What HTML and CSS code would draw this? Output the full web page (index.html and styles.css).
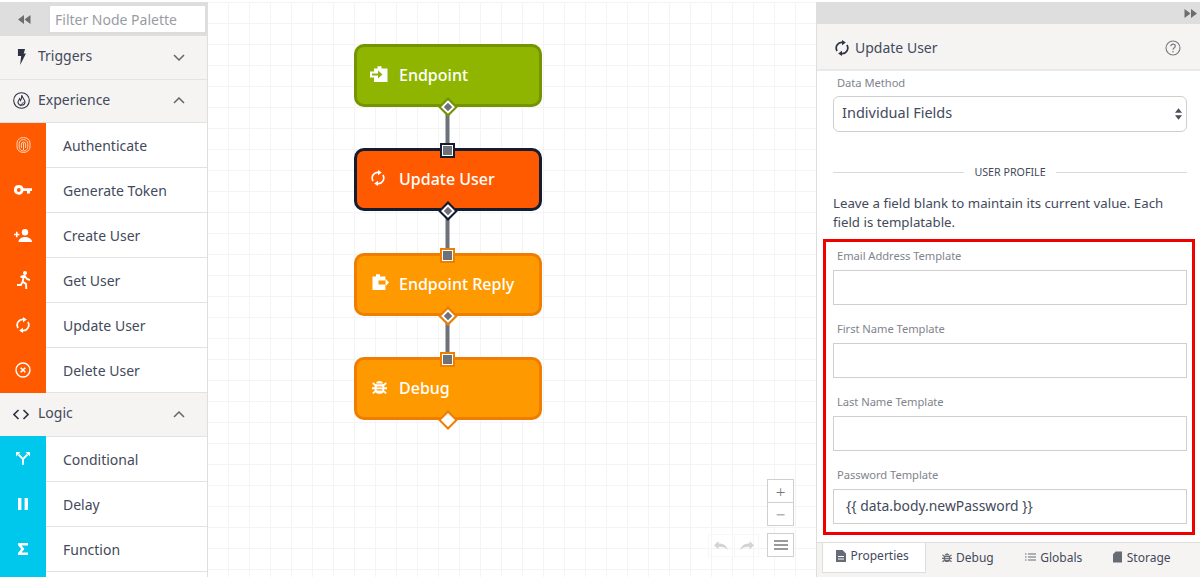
FILE: index.html
```html
<!DOCTYPE html>
<html lang="en">
<head>
<meta charset="utf-8">
<title>Update User workflow</title>
<link rel="stylesheet" href="styles.css">
</head>
<body>
<svg class="defs" width="0" height="0" aria-hidden="true">
  <symbol id="i-sync" viewBox="0 0 14 16">
    <path d="M2.100 11A5.700 5.700 0 0 1 8 2.400" fill="none" stroke="currentColor" stroke-width="1.700"/>
    <path d="M7 0 10.800 2.600 7 5.200Z" fill="currentColor"/>
    <path d="M11.900 5A5.700 5.700 0 0 1 6 13.600" fill="none" stroke="currentColor" stroke-width="1.700"/>
    <path d="M7 16 3.200 13.400 7 10.800Z" fill="currentColor"/>
  </symbol>
  <symbol id="i-in" viewBox="0 0 18 16">
    <path d="M4 2.500H7.500V0.300H11.500V2.500H17.500V16H4Z" fill="#fff"/>
    <path d="M0 5.500H4V11.500H0Z" fill="#fff"/>
    <path d="M2 7.500H8V4.500L12.500 8.500 8 12.500V9.500H2Z" fill="#8fb500"/>
  </symbol>
  <symbol id="i-out" viewBox="0 0 18 16">
    <path d="M0.500 2.500H4V0.300H8V2.500H13.500V16H0.500Z" fill="#fff"/>
    <path d="M6.500 6.500H13.500V3.500L18 8.500 13.500 13.500V10.500H6.500Z" fill="#ff9900"/>
    <path d="M13.500 4.800 17 8.500 13.500 12.200Z" fill="#fff"/>
  </symbol>
  <symbol id="i-bug" viewBox="0 0 16 16">
    <path d="M4.500 4.200C4.500 0.800 11.500 0.800 11.500 4.200Z" fill="currentColor"/>
    <path d="M3.500 5H12.500C13.600 7 13.600 12 12 13.800 10.500 15.600 5.500 15.600 4 13.800 2.400 12 2.400 7 3.500 5Z" fill="currentColor"/>
    <path d="M0.800 3.800 4 6.300M15.200 3.800 12 6.300M0 9.300H4M16 9.300H12M0.800 14.800 4 12.300M15.200 14.800 12 12.300" stroke="currentColor" stroke-width="2" fill="none"/>
    <path d="M5 8H11M5 11H11" stroke="var(--stripe)" stroke-width="1.300"/>
  </symbol>
</svg>
<div class="app">
  <aside class="palette">
    <div class="palette-top">
      <button class="collapse" aria-label="Collapse"><svg width="13" height="9" viewBox="0 0 13 9"><path d="M6 0V9L0 4.500ZM12.500 0V9L6.500 4.500Z" fill="#6d6d6d"/></svg></button>
      <input class="filter" placeholder="Filter Node Palette">
    </div>

    <div class="cat">
      <span class="cat-icon"><svg width="9" height="16" viewBox="0 0 10 18"><path d="M1 0H9L7.500 5H10L3.500 18 4.600 8H1Z" fill="#2d3345"/></svg></span>
      <span class="cat-name">Triggers</span>
      <svg class="chev" width="12" height="7" viewBox="0 0 12 7"><path d="M1 1 6 6 11 1" fill="none" stroke="#666" stroke-width="1.500"/></svg>
    </div>
    <div class="cat">
      <span class="cat-icon"><svg width="17" height="17" viewBox="0 0 17 17"><circle cx="8.500" cy="8.500" r="7.800" fill="none" stroke="#2d3345" stroke-width="1.100"/><path d="M8.700 3.200C9.200 6 12 7.600 12 10.400A3.600 3.600 0 0 1 5 10.600C5 8.800 6.200 8 6.600 6.600 7.200 7.200 7.500 7.800 7.600 8.400 8.500 7 8.900 5 8.700 3.200Z" fill="none" stroke="#2d3345" stroke-width="1.100"/><path d="M7 14 10.600 10" stroke="#2d3345" stroke-width="0.900"/></svg></span>
      <span class="cat-name">Experience</span>
      <svg class="chev" width="12" height="7" viewBox="0 0 12 7"><path d="M1 6 6 1 11 6" fill="none" stroke="#666" stroke-width="1.500"/></svg>
    </div>

    <div class="item">
      <span class="tile orange"><svg width="15" height="16" viewBox="0 0 15 16" fill="none" stroke="#ffd2b8" stroke-width="1"><path d="M1 6A6.500 5.500 0 0 1 14 6V10A6.500 5.500 0 0 1 1 10Z"/><path d="M3.200 10V6.500A4.300 4 0 0 1 11.800 6.500V10A4.300 4 0 0 1 3.200 10Z"/><path d="M5.400 11V7A2.100 2 0 0 1 9.600 7V11"/><path d="M7.500 6V13"/></svg></span>
      <span class="item-name">Authenticate</span>
    </div>
    <div class="item">
      <span class="tile orange"><svg width="18" height="10" viewBox="0 0 18 10"><path d="M4.800 0A4.800 4.800 0 0 1 9.400 3.200H18V6H16V8.500H13V6H9.400A4.800 4.800 0 1 1 4.800 0ZM4.800 3.100A1.900 1.900 0 1 0 4.800 6.900 1.900 1.900 0 0 0 4.800 3.100Z" fill="#fff" fill-rule="evenodd"/></svg></span>
      <span class="item-name">Generate Token</span>
    </div>
    <div class="item">
      <span class="tile orange"><svg width="18" height="13" viewBox="0 0 18 13"><circle cx="11" cy="3.200" r="3.200" fill="#fff"/><path d="M4.500 13C4.500 9.500 8 8 11 8S18 9.500 18 13Z" fill="#fff"/><path d="M0 5.500H5.500M2.750 2.800V8.200" stroke="#fff" stroke-width="1.600"/></svg></span>
      <span class="item-name">Create User</span>
    </div>
    <div class="item">
      <span class="tile orange"><svg width="13" height="18" viewBox="0 0 13 18"><circle cx="8" cy="2" r="2" fill="#fff"/><path d="M3.500 6 7.500 4.600 10 8 13 9M6.700 5.500 5.700 10.500 9 13 9.300 18M5.200 11.500 3.800 14H0" fill="none" stroke="#fff" stroke-width="1.900"/></svg></span>
      <span class="item-name">Get User</span>
    </div>
    <div class="item">
      <span class="tile orange"><svg class="white" width="14" height="16"><use href="#i-sync"/></svg></span>
      <span class="item-name">Update User</span>
    </div>
    <div class="item">
      <span class="tile orange"><svg width="16" height="16" viewBox="0 0 16 16" fill="none" stroke="#fff"><circle cx="8" cy="8" r="7" stroke-width="1.400"/><path d="M5.700 5.700 10.300 10.300M10.300 5.700 5.700 10.300" stroke-width="1.600"/></svg></span>
      <span class="item-name">Delete User</span>
    </div>

    <div class="cat">
      <span class="cat-icon"><svg width="16" height="11" viewBox="0 0 16 11" fill="none" stroke="#2d3345" stroke-width="1.600"><path d="M5.500 1 1 5.500 5.500 10M10.500 1 15 5.500 10.500 10"/></svg></span>
      <span class="cat-name">Logic</span>
      <svg class="chev" width="12" height="7" viewBox="0 0 12 7"><path d="M1 6 6 1 11 6" fill="none" stroke="#666" stroke-width="1.500"/></svg>
    </div>
    <div class="item logic">
      <span class="tile cyan"><svg width="14" height="13" viewBox="0 0 14 13"><path d="M7 13V7L2.500 2.500M7 7 11.500 2.500" fill="none" stroke="#fff" stroke-width="1.800"/><path d="M0 0H4.500L0 4.500ZM14 0H9.500L14 4.500Z" fill="#fff"/></svg></span>
      <span class="item-name">Conditional</span>
    </div>
    <div class="item logic">
      <span class="tile cyan"><svg width="10" height="12" viewBox="0 0 10 12"><rect width="3.400" height="12" fill="#fff"/><rect x="6.600" width="3.400" height="12" fill="#fff"/></svg></span>
      <span class="item-name">Delay</span>
    </div>
    <div class="item logic">
      <span class="tile cyan"><svg width="10" height="12" viewBox="0 0 10 12"><path d="M0 0H10V2.400H3.600L6.400 6 3.600 9.600H10V12H0V10L3.200 6 0 2Z" fill="#fff"/></svg></span>
      <span class="item-name">Function</span>
    </div>
    <div class="item">
      <span class="tile cyan"></span>
    </div>
  </aside>

  <main class="canvas">
    <svg class="wires" width="608" height="575" viewBox="208 2 608 575">
      <path d="M447.500 105V150M447.500 209V254M447.500 314V358" stroke="#6f7178" stroke-width="4" fill="none"/>
    </svg>

    <div class="node node-a green">
      <svg class="node-icon" width="18" height="16"><use href="#i-in"/></svg>
      <span>Endpoint</span>
      <i class="port-out"></i>
    </div>
    <div class="node node-b red">
      <i class="port-in"></i>
      <svg class="node-icon sync" width="14" height="16"><use href="#i-sync"/></svg>
      <span>Update User</span>
      <i class="port-out"></i>
    </div>
    <div class="node node-c amber">
      <i class="port-in"></i>
      <svg class="node-icon reply" width="18" height="16"><use href="#i-out"/></svg>
      <span>Endpoint Reply</span>
      <i class="port-out"></i>
    </div>
    <div class="node node-d amber">
      <i class="port-in"></i>
      <svg class="node-icon bug" width="15" height="16"><use href="#i-bug"/></svg>
      <span>Debug</span>
      <i class="port-out open"></i>
    </div>

    <div class="zoom-box">
      <button class="zoom-btn" aria-label="Zoom in">+</button>
      <button class="zoom-btn minus" aria-label="Zoom out">&minus;</button>
    </div>
    <div class="history">
      <span class="hist-btn"><svg width="14" height="9" viewBox="0 0 14 9"><path d="M4.500 0V2.500C9.500 2.500 12.500 4.500 14 9 11.500 6.500 9 5.800 4.500 5.800V8.500L0 4.200Z" fill="#d4d4d4"/></svg></span>
      <span class="hist-btn"><svg width="14" height="9" viewBox="0 0 14 9"><path d="M9.500 0V2.500C4.500 2.500 1.500 4.500 0 9 2.500 6.500 5 5.800 9.500 5.800V8.500L14 4.200Z" fill="#d4d4d4"/></svg></span>
      <button class="menu-btn" aria-label="Menu"><svg width="14" height="10" viewBox="0 0 14 10"><path d="M0 1H14M0 5H14M0 9H14" stroke="#7a7a7a" stroke-width="1.400"/></svg></button>
    </div>
  </main>

  <aside class="props">
    <div class="props-bar"><svg width="13" height="9" viewBox="0 0 13 9"><path d="M0.500 0V9L6.500 4.500ZM7 0V9L13 4.500Z" fill="#6d6d6d"/></svg></div>
    <header class="props-head">
      <svg class="dark" width="14" height="16"><use href="#i-sync"/></svg>
      <h1>Update User</h1>
      <svg class="help" width="16" height="16" viewBox="0 0 16 16" fill="none" stroke="#77797f"><circle cx="8" cy="8" r="7" stroke-width="1.100"/><path d="M5.800 6.200C5.800 3.500 10.300 3.600 10.300 6.200 10.300 7.800 8 7.800 8 9.800" stroke-width="1.200"/><path d="M8 11V12.300" stroke-width="1.300"/></svg>
    </header>
    <div class="props-body">
      <div class="method">
        <label class="lbl">Data Method</label>
        <div class="select">
          <span>Individual Fields</span>
          <svg width="7" height="12" viewBox="0 0 8 13"><path d="M4 0 8 5H0ZM0 8H8L4 13Z" fill="#4a4f5c"/></svg>
        </div>
      </div>
      <div class="divider"><span>USER PROFILE</span></div>
      <p class="help-text">Leave a field blank to maintain its current value. Each field is templatable.</p>
      <div class="highlight">
        <div class="field"><label class="lbl">Email Address Template</label><div class="input"></div></div>
        <div class="field"><label class="lbl">First Name Template</label><div class="input"></div></div>
        <div class="field"><label class="lbl">Last Name Template</label><div class="input"></div></div>
        <div class="field"><label class="lbl">Password Template</label><div class="input">{{ data.body.newPassword }}</div></div>
      </div>
    </div>
    <nav class="tabs">
      <span class="tab active"><svg width="10" height="12" viewBox="0 0 10 12"><path d="M0 0H6.500L10 3.500V12H0ZM2 6V7H8V6ZM2 8.500V9.500H8V8.500Z" fill="#666b76" fill-rule="evenodd"/></svg>Properties</span>
      <span class="tab"><svg class="mid" width="10" height="11"><use href="#i-bug"/></svg>Debug</span>
      <span class="tab"><svg width="11" height="8" viewBox="0 0 11 8"><path d="M0 1H1.500M3 1H11M0 4H1.500M3 4H11M0 7H1.500M3 7H11" stroke="#666b76" stroke-width="1.100"/></svg>Globals</span>
      <span class="tab"><svg width="9" height="12" viewBox="0 0 10 12"><path d="M3 0H10V12H0V3Z" fill="#666b76"/></svg>Storage</span>
    </nav>
  </aside>
</div>
</body>
</html>
```

FILE: styles.css
```css
* { box-sizing: border-box; }
html, body { margin: 0; height: 100%; }
body {
  font-family: "Noto Sans", "Open Sans", sans-serif;
  color: #434a5b;
  background: #fff;
  overflow: hidden;
}
.defs { position: absolute; }
.white { color: #fff; }
.dark { color: #2d3345; }
.mid { color: #666b76; }

.app {
  display: flex;
  height: 577px;
  padding-top: 2px;
  background: #fff;
}

/* palette */
.palette {
  width: 208px;
  flex: none;
  border-right: 1px solid #dedede;
  overflow: hidden;
  height: 575px;
}
.palette-top {
  display: flex;
  height: 34px;
  background: #dedede;
}
.collapse {
  width: 48px;
  border: 0;
  padding: 0;
  background: transparent;
  display: flex;
  align-items: center;
  justify-content: center;
}
.filter {
  width: 158px;
  height: 29px;
  margin-top: 3px;
  border: 1px solid #dcdcdc;
  border-width: 1px 1px 2px 2px;
  background: #fff;
  padding: 0 0 0 5px;
  font: 14px "Noto Sans", sans-serif;
  outline: 0;
}
.filter::placeholder { color: #9a9ca3; opacity: 1; }

.cat {
  display: flex;
  align-items: center;
  height: 43.500px;
  background: #f5f4f3;
  border-bottom: 1px solid #e3e3e3;
  padding-right: 22px;
}
.cat-icon {
  width: 42px;
  margin-right: -4px;
  display: flex;
  justify-content: center;
}
.cat-name { flex: 1; font-size: 14px; padding-bottom: 3px; }
.item {
  display: flex;
  align-items: center;
  height: 45px;
  border-bottom: 1px solid #e2e2e2;
  background: #fff;
}
.tile {
  width: 46px;
  height: 45px;
  flex: none;
  display: flex;
  align-items: center;
  justify-content: center;
}
.orange { background: #ff5a00; }
.cyan { background: #00c8ed; }
.item-name {
  margin-left: 17px;
  font-size: 14px;
}
.logic .item-name { padding-top: 2px; }

/* canvas */
.canvas {
  position: relative;
  width: 608px;
  flex: none;
  height: 575px;
  background-color: #fff;
  background-image:
    linear-gradient(#f4f4f4 1px, transparent 1px),
    linear-gradient(90deg, #f4f4f4 1px, transparent 1px);
  background-size: 21px 21px;
  background-position: -1px 0;
}
.wires { position: absolute; left: 0; top: 0; }
.node {
  position: absolute;
  left: 146px;
  width: 188px;
  height: 63px;
  border-radius: 10px;
  border: 3px solid;
  display: flex;
  align-items: center;
  color: #fff;
  font-size: 16px;
  font-weight: 500;
}
.node-a { top: 42px; }
.node-b { top: 146px; }
.node-c { top: 251px; }
.node-d { top: 355px; }
.green { background: #8fb500; border-color: #759500; }
.red { background: #ff5a00; border-color: #141c33; }
.amber { background: #ff9900; border-color: #ee7d00; --stripe: #ff9900; }
.node-icon { position: absolute; left: 13px; top: 19px; }
.sync { left: 14px; top: 19px; }
.bug { left: 15px; top: 19px; }
.reply { left: 15px; top: 18px; }
.node span { margin-left: 42px; padding-bottom: 1px; }
.port-out {
  position: absolute;
  left: 85.500px;
  bottom: -7.500px;
  width: 10px;
  height: 10px;
  transform: rotate(45deg);
  background: #6f7178;
  border: 2px solid #fff;
  outline: 2px solid #759500;
}
.port-out.open { background: #fff; border-color: #fff; outline-color: #ee7d00; }
.red .port-out { outline-color: #141c33; }
.amber .port-out { outline-color: #ee7d00; }
.port-in {
  position: absolute;
  left: 85px;
  top: -6px;
  width: 11px;
  height: 11px;
  background: #6f7178;
  border: 1px solid #fff;
  outline: 2px solid #ee7d00;
}
.red .port-in { outline-color: #141c33; }

.zoom-box {
  position: absolute;
  left: 559px;
  top: 477px;
  width: 27px;
  height: 47px;
  border: 1px solid #cfcfcf;
  background: #fff;
  display: flex;
  flex-direction: column;
}
.zoom-btn {
  flex: 1;
  min-height: 0;
  border: 0;
  padding: 0;
  background: transparent;
  font: 300 17px/17px "Noto Sans", sans-serif;
  color: #777;
}
.minus { border-top: 1px solid #cfcfcf; }
.history {
  position: absolute;
  left: 500px;
  top: 531px;
  display: flex;
  align-items: center;
}
.hist-btn {
  width: 25px;
  height: 23px;
  margin-right: 1px;
  border: 1px solid #f7f7f7;
  display: flex;
  align-items: center;
  justify-content: center;
}
.menu-btn {
  width: 27px;
  height: 24px;
  margin-left: 7px;
  border: 1px solid #cfcfcf;
  background: #fff;
  padding: 0;
  display: flex;
  align-items: center;
  justify-content: center;
}

/* properties */
.props {
  width: 384px;
  flex: none;
  height: 575px;
  border-left: 1px solid #dedede;
  display: flex;
  flex-direction: column;
}
.props-bar {
  height: 22px;
  background: #dedede;
  display: flex;
  align-items: center;
  justify-content: flex-end;
  padding-right: 3px;
}
.props-head {
  height: 47px;
  background: #f5f4f3;
  border-bottom: 2px solid #e9e9e9;
  display: flex;
  align-items: center;
  padding: 2px 19px 0 18px;
  gap: 6px;
}
.props-head h1 {
  flex: 1;
  margin: 0;
  font-size: 14px;
  font-weight: 400;
}
.props-body {
  flex: 1;
  padding: 4px 5px 0 6px;
  min-height: 0;
}
.lbl {
  display: block;
  font-size: 11.200px;
  letter-spacing: -0.050px;
  color: #81848d;
  line-height: 16px;
  padding-left: 4px;
}
.method { padding: 0 8px 0 10px; }
.method .lbl { padding-left: 0; margin-left: 4px; }
.select {
  margin-top: 5px;
  height: 36px;
  border: 1px solid #cfcfcf;
  border-radius: 6px;
  display: flex;
  align-items: center;
  justify-content: space-between;
  padding: 0 4px 5px 8px;
  font-size: 14.500px;
}
.select svg { margin-top: 5px; }
.divider {
  display: flex;
  align-items: center;
  gap: 10px;
  padding: 0 8px 0 10px;
  margin-top: 30px;
  font-size: 10.700px;
  line-height: 20px;
  color: #434a5b;
}
.divider::before, .divider::after {
  content: "";
  flex: 1;
  height: 1px;
  background: #d8d8d8;
}
.help-text {
  margin: 12px 8px 0 10px;
  font-size: 13.250px;
  line-height: 19px;
}
.highlight {
  margin-top: 7px;
  border: 3px solid #f10000;
  height: 296px;
  padding: 6px 5px 0 7px;
}
.field { height: 73px; }
.input {
  margin-top: 6px;
  height: 35px;
  border: 1px solid #cfcfcf;
  padding: 0 12px;
  font-size: 13.900px;
  line-height: 31px;
}
.tabs {
  height: 35px;
  flex: none;
  background: #f5f4f3;
  border-top: 1px solid #dedede;
  display: flex;
  padding-left: 5px;
  font-size: 12px;
}
.tab {
  height: 28px;
  display: flex;
  align-items: center;
  gap: 4.500px;
  padding: 0 15.500px;
  --stripe: #f5f4f3;
}
.tab svg { flex: none; }
.tab.active {
  width: 104px;
  height: 30px;
  padding: 0 13px 4px;
  background: #fff;
  border: 1px solid #dedede;
  border-width: 0 1px 1px 1px;
}
```
